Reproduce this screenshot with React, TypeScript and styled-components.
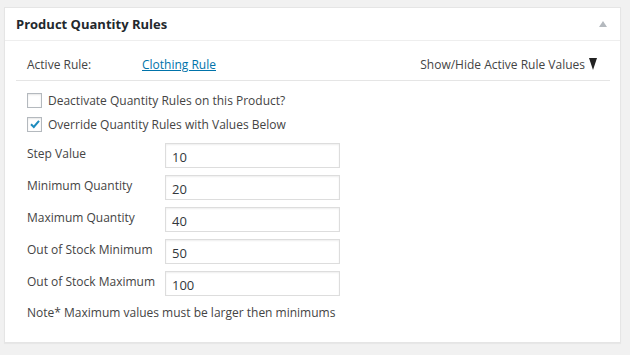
import React from "react";
import styled, { createGlobalStyle } from "styled-components";

const Global = createGlobalStyle`
  html, body { margin: 0; padding: 0; background: #f1f1f1; }
  body { font-family: "Open Sans", "Liberation Sans", sans-serif; color: #444; }
  * { box-sizing: border-box; }
`;

const Page = styled.div`
  padding: 7px 9px 12px 4px;
`;

const Panel = styled.div`
  width: 617px;
  height: 336px;
  background: #fff;
  border: 1px solid #e5e5e5;
  box-shadow: 0 1px 1px rgba(0, 0, 0, 0.04);
`;

const Header = styled.div`
  height: 33px;
  display: flex;
  align-items: center;
  justify-content: space-between;
  padding: 0 12px 0 11px;
  border-bottom: 1px solid #eee;
`;

const Title = styled.h2`
  margin: 0;
  font-size: 13px;
  font-weight: 700;
  color: #23282d;
  line-height: 1;
`;

const Toggle = styled.span`
  width: 0;
  height: 0;
  border-left: 4px solid transparent;
  border-right: 4px solid transparent;
  border-bottom: 6px solid #b4b9be;
  margin-right: 1px;
`;

const Body = styled.div`
  padding: 0 10px 0 11px;
`;

const ActiveRow = styled.div`
  height: 40px;
  display: flex;
  align-items: center;
  padding: 7px 0 0 11px;
  border-bottom: 1px solid #e5e5e5;
  font-size: 12px;
`;

const RuleLabel = styled.span`
  width: 115px;
  color: #444;
`;

const RuleLink = styled.a`
  color: #0073aa;
  text-decoration: underline;
  cursor: pointer;
`;

const ShowHide = styled.span`
  margin-left: auto;
  display: flex;
  align-items: center;
  gap: 4px;
  color: #444;
  padding-right: 13px;
`;

const Arrow = styled.span`
  width: 0;
  height: 0;
  border-left: 4.5px solid transparent;
  border-right: 4.5px solid transparent;
  border-top: 12px solid #222;
`;

const Checks = styled.div`
  padding: 11px 0 0 11px;
  display: flex;
  flex-direction: column;
  gap: 8px;
`;

const CheckRow = styled.label`
  display: flex;
  align-items: center;
  gap: 6px;
  font-size: 12px;
  height: 16px;
  color: #444;
`;

const Box = styled.span`
  width: 15px;
  height: 15px;
  border: 1px solid #b4b9be;
  background: #fff;
  box-shadow: inset 0 1px 2px rgba(0, 0, 0, 0.1);
  display: flex;
  align-items: center;
  justify-content: center;
`;

const Fields = styled.div`
  padding: 11px 0 0 11px;
  display: grid;
  grid-template-columns: 138px 175px;
  row-gap: 7px;
`;

const FieldLabel = styled.span`
  font-size: 12px;
  color: #444;
  line-height: 17px;
  padding-top: 2px;
`;

const Input = styled.div`
  height: 25px;
  border: 1px solid #ddd;
  box-shadow: inset 0 1px 2px rgba(0, 0, 0, 0.07);
  font-size: 13px;
  color: #32373c;
  padding: 3px 0 0 6px;
  line-height: 20px;
`;

const Note = styled.p`
  margin: 8px 0 0 11px;
  font-size: 12px;
  color: #444;
`;

const fields = [
  ["Step Value", "10"],
  ["Minimum Quantity", "20"],
  ["Maximum Quantity", "40"],
  ["Out of Stock Minimum", "50"],
  ["Out of Stock Maximum", "100"],
];

export default function App() {
  return (
    <>
      <Global />
      <Page>
        <Panel>
          <Header>
            <Title>Product Quantity Rules</Title>
            <Toggle />
          </Header>
          <Body>
            <ActiveRow>
              <RuleLabel>Active Rule:</RuleLabel>
              <RuleLink>Clothing Rule</RuleLink>
              <ShowHide>
                Show/Hide Active Rule Values <Arrow />
              </ShowHide>
            </ActiveRow>
            <Checks>
              <CheckRow>
                <Box />
                Deactivate Quantity Rules on this Product?
              </CheckRow>
              <CheckRow>
                <Box>
                  <svg width="12" height="12" viewBox="0 0 12 12">
                    <path d="M2 6.2 L4.8 9 L10 2.8" fill="none" stroke="#1e8cbe" strokeWidth="2" />
                  </svg>
                </Box>
                Override Quantity Rules with Values Below
              </CheckRow>
            </Checks>
            <Fields>
              {fields.map(([l, v]) => (
                <React.Fragment key={l}>
                  <FieldLabel>{l}</FieldLabel>
                  <Input>{v}</Input>
                </React.Fragment>
              ))}
            </Fields>
            <Note>Note* Maximum values must be larger then minimums</Note>
          </Body>
        </Panel>
      </Page>
    </>
  );
}
